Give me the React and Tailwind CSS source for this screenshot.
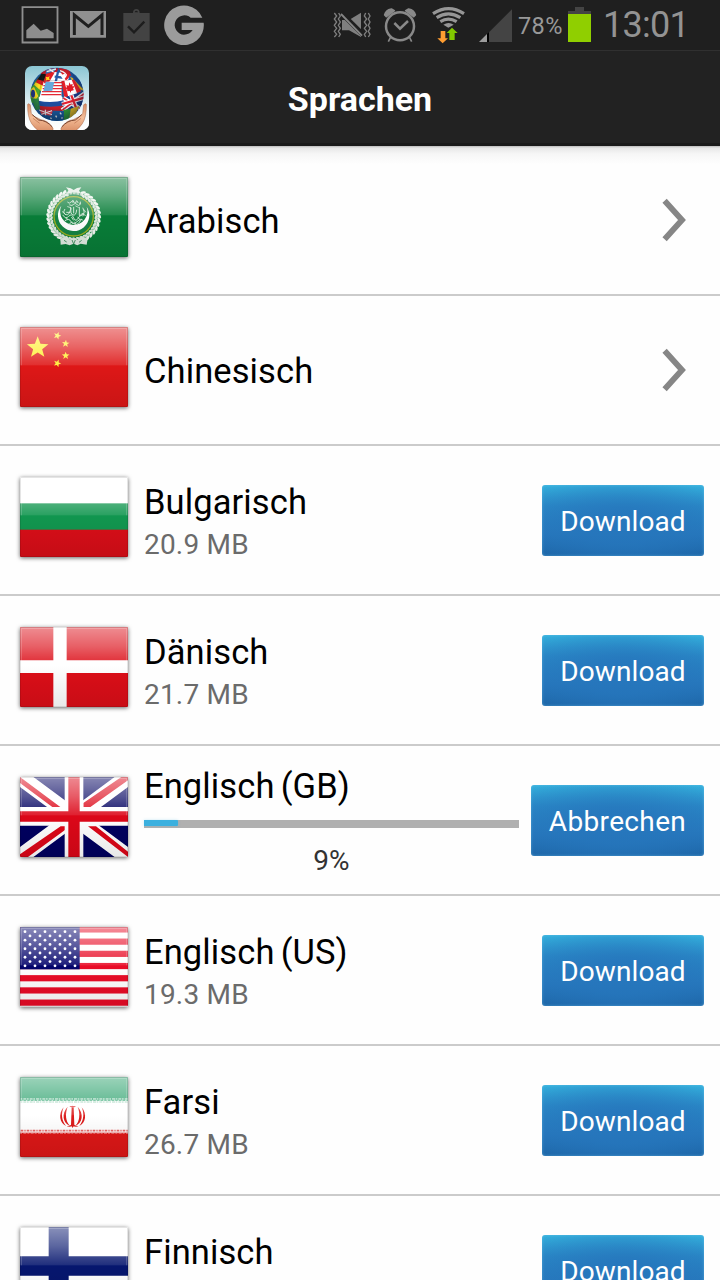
import React from 'react';

const star = (cx, cy, r, rot = 0) =>
  Array.from({ length: 10 }, (_, i) => {
    const a = ((i * 36 + rot - 90) * Math.PI) / 180;
    const q = i % 2 ? r * 0.42 : r;
    return `${(cx + q * Math.cos(a)).toFixed(1)},${(cy + q * Math.sin(a)).toFixed(1)}`;
  }).join(' ');

function Arab() {
  const leaves = Array.from({ length: 34 }, (_, i) => 22 + i * 9.6);
  return (
    <>
      <rect width="324" height="240" fill="#087d38" />
      <g transform="translate(161 118)">
        <circle r="71" fill="none" stroke="#a9cdb5" strokeWidth="10" strokeDasharray="9 2" />
        {leaves.map((a) => (
          <g key={a} transform={`rotate(${a - 90})`}>
            <ellipse cx="77" cy="0" rx="8" ry="4" fill="#eef3ed" transform="rotate(62 77 0)" />
            <ellipse cx="67" cy="3" rx="7" ry="3.5" fill="#dbe6db" transform="rotate(-60 67 3)" />
          </g>
        ))}
        <circle r="59" fill="#168343" stroke="#9cad20" strokeWidth="4" />
        <path d="M-37-32A47 47 0 1 0 39-29A41 41 0 1 1-37-32Z" fill="#fff" />
        <g fill="none" stroke="#d3e8d8" strokeWidth="2.8" strokeLinecap="round">
          <path d="M-18-42q5 6 10-1t10 0 6-3M-12-34q8 4 12-2t11 1 8-4M-2-48v7M10-46l3 5M20-43v6" />
          <path d="M-27-21q-7 9 1 15t13-4 4-16M-8-24q-3 17 6 20t11-15M17-27v25q9 2 11-7M28-25q8 12 0 24M-32-3q8 13 17 3t15 5 16-3 19-4M-26 13q13-9 18 3t18 0 17-5M-13 24q6-12 13-3t18-4M-21-12h10M0-27v17M-6 3l5 8M12 2l7 8M23 10l-5 7" />
          <path d="M-34-14l7 6M-18-29l9 3M6-31l8 4M31-20l5 7M-24 5l7 4M3 17l5 8" strokeWidth="2.4" />
        </g>
        <path d="M-23-87l14 3 9 5 10-6 13-2-7 10 5 8-21-3-20 4 4-10zM-40 67l17-5 12 9 11-5 11 5 13-9 18 5-3 18-18-3-10 5-11-5-12 5-12-4-15 2z" fill="#dfeae0" />
        <path d="M-29 72l8 5M24 72l-8 6M-5 71l5 12 5-12" stroke="#4b9868" strokeWidth="3" fill="none" />
      </g>
    </>
  );
}

function China() {
  return (
    <>
      <rect width="324" height="240" fill="#de1717" />
      <g fill="#ffee2c">
        <polygon points={star(53, 62, 34)} />
        <polygon points={star(112, 26, 12, 20)} />
        <polygon points={star(137, 50, 12, 5)} />
        <polygon points={star(137, 86, 12)} />
        <polygon points={star(112, 109, 12, 20)} />
      </g>
    </>
  );
}

function Bulgaria() {
  return (
    <>
      <rect width="324" height="80" fill="#fff" />
      <rect y="79" width="324" height="80" fill="#11964f" />
      <rect y="158" width="324" height="82" fill="#d90e18" />
    </>
  );
}

function Denmark() {
  return (
    <>
      <rect width="324" height="240" fill="#dc0e18" />
      <path d="M100 0h40v240h-40zM0 100h324v38H0z" fill="#fff" />
    </>
  );
}

function Britain() {
  return (
    <>
      <rect width="324" height="240" fill="#00005f" />
      <path d="M0 0L324 240M324 0L0 240" stroke="#fff" strokeWidth="48" />
      <path d="M0 0L124 92h-24L0 18zM324 0h-20L190 78v14h18L324 10zM0 240h24l112-82v-10h-14L0 232zM324 240v-16L228 148h-24z" fill="#dd0718" />
      <path d="M134 0h56v240h-56zM0 90h324v56H0z" fill="#fff" />
      <path d="M145 0h34v240h-34zM0 103h324v31H0z" fill="#dc0718" />
    </>
  );
}

function Usa() {
  const stars = [];
  for (let r = 0; r < 9; r++)
    for (let c = 0; c < (r % 2 ? 5 : 6); c++)
      stars.push(<circle key={`${r}-${c}`} cx={15 + c * 30 + (r % 2 ? 15 : 0)} cy={14 + r * 12.8} r="4.2" />);
  return (
    <>
      <rect width="324" height="240" fill="#fff" />
      {[0, 1, 2, 3, 4, 5, 6].map((i) => (
        <rect key={i} y={i * 36.6 - 2} width="324" height="18.6" fill="#e90c27" />
      ))}
      <rect width="179" height="127" fill="#04046c" />
      <g fill="#fff">{stars}</g>
    </>
  );
}

function Iran() {
  return (
    <>
      <rect width="324" height="240" fill="#fff" />
      <rect width="324" height="70" fill="#2ba16c" />
      <rect y="167" width="324" height="73" fill="#de1717" />
      <path d="M2 66h322M2 75h322" stroke="#b9dfcd" strokeWidth="4" strokeDasharray="5 3 9 2" />
      <path d="M0 70h324" stroke="#54b58a" strokeWidth="4" strokeDasharray="7 4" />
      <path d="M2 161h322" stroke="#e66666" strokeWidth="5" strokeDasharray="8 3 4 3" />
      <path d="M0 167h324" stroke="#f3b5b5" strokeWidth="5" strokeDasharray="6 4 9 3" />
      <g transform="translate(158 119)" fill="#dc1c1c">
        <path d="M-3-28h6l2 52-5 10-5-10zM-10-33q5 4 10 0 5 4 10 0-3 7-10 3-7 4-10-3z" />
        <path d="M-15-30C-34-10-30 20-8 27-22 14-23-10-15-30zM15-30C34-10 30 20 8 27 22 14 23-10 15-30z" />
        <path d="M-27-28C-44-8-39 20-20 28-34 12-35-10-27-28zM27-28C44-8 39 20 20 28 34 12 35-10 27-28z" />
        <path d="M-18 29q10-2 18-7 8 5 18 7-10 3-18-1-8 4-18 1z" />
      </g>
    </>
  );
}

function Finland() {
  return (
    <>
      <rect width="324" height="240" fill="#fff" />
      <path d="M86 0h60v240H86zM0 88h324v58H0z" fill="#06166e" />
    </>
  );
}

function Flag({ id, art: Art }) {
  return (
    <svg viewBox="0 0 324 240" className="mt-[31px] h-20 w-[108px] shrink-0 self-start rounded-[1px] shadow-[0_1px_4px_rgba(0,0,0,0.6)]">
      <defs>
        <linearGradient id={`gloss-${id}`} x2="0" y2="1">
          <stop offset="0" stopColor="#fff" stopOpacity="0.53" />
          <stop offset="0.5" stopColor="#fff" stopOpacity="0.34" />
          <stop offset="1" stopColor="#fff" stopOpacity="0.1" />
        </linearGradient>
        <linearGradient id={`shade-${id}`} x2="0" y2="1">
          <stop offset="0" stopOpacity="0" />
          <stop offset="1" stopOpacity="0.09" />
        </linearGradient>
      </defs>
      <Art />
      <rect width="324" height="115" fill={`url(#gloss-${id})`} />
      <rect y="115" width="324" height="125" fill={`url(#shade-${id})`} />
      <rect x="1.5" y="1.5" width="321" height="237" fill="none" stroke="#000" strokeOpacity="0.1" strokeWidth="3" />
      <path d="M4 115V4.500H320V115" fill="none" stroke="#fff" strokeOpacity="0.22" strokeWidth="3" />
    </svg>
  );
}

function Chevron() {
  return (
    <svg viewBox="0 0 24 44" className="mr-[18px] h-11 w-6 shrink-0">
      <path d="M2.600 2.800L20 22 2.600 41.200" fill="none" stroke="#868686" strokeWidth="5.800" />
    </svg>
  );
}

function ActionButton({ children, className }) {
  return (
    <button
      className={`mt-px h-[71px] shrink-0 rounded-[3px] bg-[radial-gradient(ellipse_75%_75%_at_50%_60%,rgba(38,118,188,0.85)_30%,rgba(38,118,188,0)_100%),linear-gradient(to_bottom,#34b0dc_0%,#2a8ac8_30%,#2676bb_70%,#1b62a2_100%)] pt-0.5 text-center text-[28px] leading-[69px] text-white shadow-[inset_0_0_3px_rgba(120,200,240,0.55)] ${className}`}
    >
      {children}
    </button>
  );
}

function Row({ id, art, name, size, progress }) {
  return (
    <li className="flex h-[150px] shrink-0 items-center border-b-2 border-[#cbcbcb] pr-4 pl-5">
      <Flag id={id} art={art} />
      {progress ? (
        <div className="ml-4 flex h-full w-[375px] flex-col">
          <span className="mt-5 h-10 text-[34.500px] leading-10 tracking-[0.1px] [word-spacing:-2.500px] whitespace-nowrap text-black">{name}</span>
          <div className="mt-[14px] h-2 bg-[#b0b0b0]">
            <div className="h-1.5 rounded-r-[1px] bg-[#3bb0df] shadow-[0_0_3px_rgba(59,176,223,0.3)]" style={{ width: `${progress}%` }} />
          </div>
          <span className="mt-[17px] text-center text-[28px] leading-8 text-[#333]">{progress}%</span>
        </div>
      ) : (
        <div className={`ml-4 flex flex-1 flex-col ${size ? 'mt-[5px]' : 'mt-0.5'}`}>
          <span className="text-[34.500px] leading-10 tracking-[0.1px] [word-spacing:-2.500px] whitespace-nowrap text-black">{name}</span>
          {size && <span className="mt-[5px] text-[28px] leading-9 tracking-[0.2px] text-[#6b6b6b]">{size}</span>}
        </div>
      )}
      {progress && <ActionButton className="ml-3 w-[173px] tracking-[0.350px]">Abbrechen</ActionButton>}
      {size && <ActionButton className="w-[162px] tracking-[0.1px]">Download</ActionButton>}
      {!size && !progress && <Chevron />}
    </li>
  );
}

function GlobeIcon() {
  return (
    <svg viewBox="75 198 192 192" className="size-16 shrink-0 rounded-[7px]">
      <defs>
        <linearGradient id="sky" x2="0" y2="1">
          <stop offset="0" stopColor="#8bc5d3" />
          <stop offset="0.7" stopColor="#f1f8f9" />
          <stop offset="1" stopColor="#fff" />
        </linearGradient>
        <radialGradient id="ball" cx="0.48" cy="0.42" r="0.55">
          <stop offset="0.6" stopColor="#012" stopOpacity="0" />
          <stop offset="1" stopColor="#012" stopOpacity="0.4" />
        </radialGradient>
        <linearGradient id="skin" x2="0" y2="1">
          <stop offset="0" stopColor="#d99068" />
          <stop offset="0.5" stopColor="#f4bd98" />
          <stop offset="1" stopColor="#d98e66" />
        </linearGradient>
        <clipPath id="globe"><circle cx="171" cy="283" r="80" /></clipPath>
      </defs>
      <rect x="75" y="198" width="192" height="192" fill="url(#sky)" />
      <g clipPath="url(#globe)">
        <rect x="90" y="200" width="165" height="165" fill="#2460a8" />
        <path d="M120 205h55l-8 25-42 6z" fill="#c91a28" />
        <path d="M138 208l30-4-3 9-28 9z" fill="#3c6fb5" />
        <path d="M140 215l28-8M145 204l18 15" stroke="#fff" strokeWidth="4" />
        <path d="M135 224l27-8-9 30-30 6z" fill="#e31d22" />
        <path d="M137 230l7 2 5-4-2 7 3 6-7-2-6 3 2-6z" fill="#ffd51f" />
        <path d="M126 222l-22 24-12 38 26-22 16-26z" fill="#3c9f31" />
        <path d="M110 241l15-20 12 2-18 36z" fill="#151515" />
        <path d="M106 249l8-13 26 10-6 13z" fill="#d71c1c" />
        <path d="M98 260l9-13 28 13-8 15z" fill="#ffd91c" />
        <path d="M126 221l12 3-7 18-17-3z" fill="#161616" />
        <path d="M90 263l12-9 19 17-5 37-25 1z" fill="#4ca92c" />
        <path d="M92 268l10-8 13 29-12 14-12-16z" fill="#ffe11f" />
        <ellipse cx="99" cy="281" rx="6" ry="12" fill="#26388b" />
        <path d="M165 216l30 4-4 27-43-2z" fill="#fff" />
        <path d="M164 230l32 4M174 215l-7 32" stroke="#265ba7" strokeWidth="7" />
        <path d="M176 204l33 4 5 20-27-3z" fill="#db1d28" />
        <path d="M181 226l13-5 12 17-12 9z" fill="#fff" />
        <path d="M180 212q18 4 25 24" stroke="#fff" strokeWidth="4" fill="none" />
        <path d="M196 239q10-7 9-18" stroke="#e32028" strokeWidth="7" fill="none" />
        <path d="M208 213l24 25 16 27-27-26z" fill="#23539f" />
        <path d="M210 230l26 12 16 30-23-7z" fill="#f1bc1a" />
        <path d="M218 222l25 24 5 20-28-28z" fill="#204d96" />
        <path d="M131 246l55-4-2 53-67 3z" fill="#fff" />
        <path d="M132 248h54M130 257h56M128 266h58M126 275h59M124 284h60" stroke="#e42835" strokeWidth="4" />
        <path d="M137 245l26 1-6 26-27 2z" fill="#65a9db" />
        <path d="M184 243l39-4 21 35-51 20z" fill="#e61f29" />
        <path d="M193 242l22-3 17 43-27 9z" fill="#fff" />
        <path d="M208 247l4 7 6-3-1 8 6 0-4 8 4 3-10 3v6l-4-6-9 1 3-4-7-6 5-2-2-7 7 2z" fill="#df1925" />
        <path d="M116 290q36 10 70-1l8 18q-39 9-78 1z" fill="#fff" />
        <path d="M115 302q38 9 80-2l-3 16q-38 8-73 1z" fill="#1d4d9e" />
        <path d="M117 317q37 7 77-1l-5 17q-35 7-67 0z" fill="#c51d27" />
        <path d="M188 294l61-20 5 28-16 25-48 4z" fill="#1b3d89" />
        <path d="M190 294l54 35M186 331l68-51" stroke="#fff" strokeWidth="13" />
        <path d="M190 294l54 35M186 331l68-51" stroke="#e32231" strokeWidth="5" />
        <path d="M186 312l66-19M214 286l17 45" stroke="#fff" strokeWidth="13" />
        <path d="M186 312l66-19M214 286l17 45" stroke="#e32231" strokeWidth="7" />
        <path d="M95 294l21 4 4 30-14 3z" fill="#329044" />
        <path d="M190 330l22-4-5 33-16 6z" fill="#349f39" />
        <path d="M212 326l26-8-10 22-20 16z" fill="#f2c620" />
        <path d="M114 331l78 2-2 32h-50z" fill="#1b5a9f" />
        <path d="M118 329l40 4-4 14-30-4z" fill="#e53d4c" />
        <path d="M117 330l39 14M124 343l32-11M136 329l1 17" stroke="#fff" strokeWidth="3" />
        <path d="M167 347l3 5M180 338l4 5M151 353l4 3M185 352l2 4" stroke="#fff" strokeWidth="4" />
        <path d="M129 226q-8 33-14 72 1 26 5 34M185 246q2 48 6 86M128 244q28-6 66 0" fill="none" stroke="#173150" strokeOpacity="0.3" strokeWidth="2" />
        <circle cx="171" cy="283" r="80" fill="url(#ball)" />
      </g>
      <g fill="url(#skin)" stroke="#a66342" strokeWidth="1.500">
        <path d="M83 313q4-5 8 2l3 26 11 10q10 3 17 8 22 2 37 26v10h-40q-14-9-24-24-13-20-12-58z" />
        <path d="M259 313q-4-5-8 2l-3 26-11 10q-10 3-17 8-22 2-37 26v10h40q14-9 24-24 13-20 12-58z" />
      </g>
      <path d="M97 344l19 16q24 1 41 21M245 344l-19 16q-24 1-41 21" fill="none" stroke="#7a452f" strokeWidth="3" />
      <path d="M99 355l20 15M243 355l-20 15" fill="none" stroke="#bd7450" strokeWidth="2" />
      <path d="M75 352q7 22 26 38H75zM267 352q-7 22-26 38h26z" fill="#fff" />
    </svg>
  );
}

function StatusBar() {
  return (
    <div className="flex h-[51px] shrink-0 items-start border-b border-[#303030] bg-[#1f1f1f] text-[#999]">
      <svg viewBox="63 0 117 150" className="ml-[21px] h-[50px] w-[39px]">
        <path d="M67.500 21.500h105v106h-105z" fill="none" stroke="#8f8f8f" strokeWidth="5.500" />
        <path d="M79 115V91l22-20 21 21 19-6 20 13v16z" fill="#8d8d8d" />
      </svg>
      <svg viewBox="204 0 120 150" className="ml-2 h-[50px] w-10">
        <path d="M210 33h108v80H210z" fill="#909090" />
        <path d="M223 105V45l42 34 41-34v60" fill="none" stroke="#1f1f1f" strokeWidth="9" />
      </svg>
      <svg viewBox="366 0 90 150" className="ml-[14px] h-[50px] w-[30px]">
        <path d="M370 39h29q0-12 10-12t10 12h30v84h-79z" fill="#434343" />
        <path d="M404 37q0-5 5-5t5 5z" fill="#1d1d1d" />
        <path d="M384 79l18 18 31-32" fill="none" stroke="#1d1d1d" strokeWidth="7" />
      </svg>
      <svg viewBox="489 0 126 150" className="ml-[11px] h-[50px] w-[42px]">
        <path d="M607 53A59.500 59.500 0 1 0 611 68H545V90H578Q569 104 552 104A29 29 0 1 1 572 53Z" fill="#9b9b9b" />
      </svg>

      <svg viewBox="36 0 123 150" className="ml-[127px] h-[50px] w-[41px]">
        <path d="M66 60h21l36-22v73L87 91H66z" fill="#7f7f7f" />
        <path d="M63 38l68 68" stroke="#1f1f1f" strokeWidth="15" />
        <path d="M63 42l63 65" stroke="#858585" strokeWidth="5.500" />
        <path d="M43 39l7 9-7 9 7 9-7 10 7 9-7 9 7 9-7 8M56 39l5 9-6 9 6 9-6 10 6 9-6 9 6 9-5 8M137 39l-4 9 7 9-7 9 7 10-7 9 7 9-7 9 4 8M145 39l5 9-5 9 5 9-5 10 5 9-5 9 5 9-5 8" fill="none" stroke="#7e7e7e" strokeWidth="4" />
      </svg>
      <svg viewBox="186 0 108 150" className="ml-[9px] h-[50px] w-9">
        <circle cx="240" cy="79" r="42" fill="none" stroke="#898989" strokeWidth="7.500" />
        <path d="M194 45q3-15 20-18l9 5-24 18zM286 45q-3-15-20-18l-9 5 24 18zM205 125l7-14M275 125l-7-14" fill="#898989" stroke="#898989" strokeWidth="5" strokeLinejoin="round" />
        <path d="M223 69l17 17 24-23" fill="none" stroke="#898989" strokeWidth="7.500" />
      </svg>
      <svg viewBox="330 0 111 150" className="ml-3 h-[50px] w-[37px]">
        <path d="M339 41q47-30 93 0M350 53q35-23 71 0M361 65q24-15 49 0" fill="none" stroke="#969696" strokeWidth="9.500" />
        <path d="M370 74q16-10 31 0l-16 9z" fill="#969696" />
        <path d="M362 93h14v22h8l-16 15-16-15h10z" fill="#ff9d31" />
        <path d="M388 120V99h-8l16-16 17 16h-9v21z" fill="#82c900" />
      </svg>
      <svg viewBox="474 0 105 150" className="ml-[11px] h-[50px] w-[35px]">
        <path d="M576 28v98h-69V97z" fill="#444" />
        <path d="M501 102v24h-24z" fill="#9c9c9c" />
        <path d="M501 102l6-5v29h-6z" fill="#000" />
      </svg>
      <span className="ml-[5px] w-[46px] text-[23.500px] leading-[52px] tracking-[0.4px] whitespace-nowrap">78%</span>
      <svg viewBox="744 0 69 150" className="ml-[4px] h-[50px] w-[23px]">
        <path d="M765 21h27v12h21v9h-69v-9h21z" fill="#444" />
        <path d="M744 42h69v84h-69z" fill="#90cf00" />
      </svg>
      <span className="ml-[12px] text-[36px] leading-[50px] tracking-[-0.7px] text-[#939393]">13:01</span>
    </div>
  );
}

const languages = [
  { id: 'ar', name: 'Arabisch', art: Arab },
  { id: 'zh', name: 'Chinesisch', art: China },
  { id: 'bg', name: 'Bulgarisch', art: Bulgaria, size: '20.9 MB' },
  { id: 'da', name: 'Dänisch', art: Denmark, size: '21.7 MB' },
  { id: 'gb', name: 'Englisch (GB)', art: Britain, progress: 9 },
  { id: 'us', name: 'Englisch (US)', art: Usa, size: '19.3 MB' },
  { id: 'fa', name: 'Farsi', art: Iran, size: '26.7 MB' },
  { id: 'fi', name: 'Finnisch', art: Finland, size: '\u00a0' },
];

export default function App() {
  return (
    <div className="flex h-[1280px] w-[720px] flex-col overflow-hidden bg-[#fefefe] font-[Roboto,sans-serif]">
      <StatusBar />
      <header className="grid h-[95px] shrink-0 grid-cols-[64px_1fr_64px] items-center border-b-[3px] border-[#1a1a1a] bg-[#222] px-[25px] pt-px">
        <GlobeIcon />
        <h1 className="pt-[3px] text-center text-[34px] leading-10 font-bold text-white">Sprachen</h1>
      </header>
      <ul className="flex flex-col bg-[linear-gradient(to_bottom,#bbbbbb_0px,#e8e8e8_2px,#f6f6f6_8px,#fefefe_18px)]">
        {languages.map((l) => (
          <Row key={l.id} {...l} />
        ))}
      </ul>
    </div>
  );
}
